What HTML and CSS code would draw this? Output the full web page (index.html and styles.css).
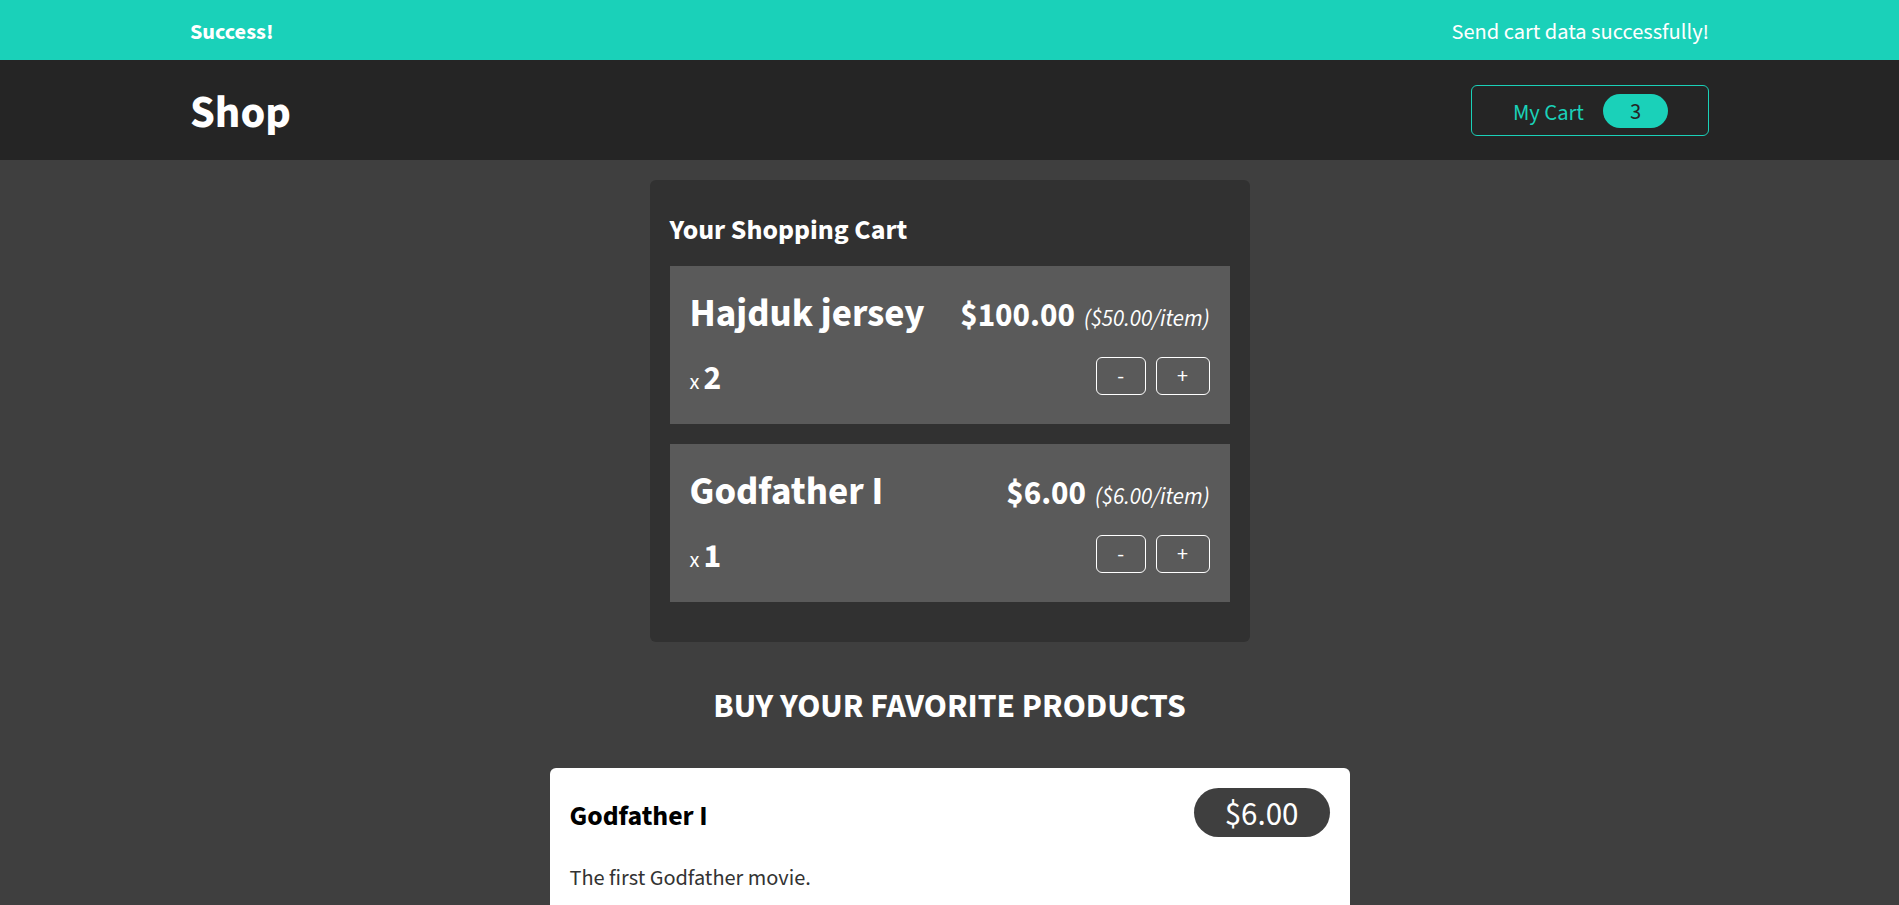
FILE: index.html
```html
<!DOCTYPE html>
<html lang="en">
<head>
<meta charset="utf-8">
<title>Shop</title>
<link rel="stylesheet" href="styles.css">
</head>
<body>
  <section class="notification">
    <div class="wrap notification-inner">
      <h2 class="notification-title">Success!</h2>
      <p class="notification-msg">Send cart data successfully!</p>
    </div>
  </section>

  <header class="main-header">
    <div class="wrap header-inner">
      <h1 class="logo">Shop</h1>
      <button class="cart-button">
        <span class="cart-label">My Cart</span>
        <span class="cart-badge">3</span>
      </button>
    </div>
  </header>

  <main class="main">
    <section class="cart">
      <h2 class="cart-title">Your Shopping Cart</h2>
      <ul class="cart-list">
        <li class="cart-item">
          <header class="item-head">
            <h3 class="item-title">Hajduk jersey</h3>
            <div class="item-price">$100.00<span class="item-unit">($50.00/item)</span></div>
          </header>
          <div class="item-foot">
            <div class="item-qty">x<span class="item-qty-num">2</span></div>
            <div class="item-actions">
              <button class="qty-btn">-</button>
              <button class="qty-btn">+</button>
            </div>
          </div>
        </li>
        <li class="cart-item">
          <header class="item-head">
            <h3 class="item-title">Godfather I</h3>
            <div class="item-price">$6.00<span class="item-unit">($6.00/item)</span></div>
          </header>
          <div class="item-foot">
            <div class="item-qty">x<span class="item-qty-num">1</span></div>
            <div class="item-actions">
              <button class="qty-btn">-</button>
              <button class="qty-btn">+</button>
            </div>
          </div>
        </li>
      </ul>
    </section>

    <section class="products">
      <h2 class="products-title">BUY YOUR FAVORITE PRODUCTS</h2>
      <ul class="product-list">
        <li class="product-card">
          <header class="product-head">
            <h3 class="product-name">Godfather I</h3>
            <div class="product-price">$6.00</div>
          </header>
          <p class="product-desc">The first Godfather movie.</p>
          <div class="product-actions">
            <button class="add-btn">Add to Cart</button>
          </div>
        </li>
        <li class="product-card">
          <header class="product-head">
            <h3 class="product-name">Hajduk jersey</h3>
            <div class="product-price">$50.00</div>
          </header>
          <p class="product-desc">The best football club jersey.</p>
          <div class="product-actions">
            <button class="add-btn">Add to Cart</button>
          </div>
        </li>
      </ul>
    </section>
  </main>
</body>
</html>
```

FILE: styles.css
```css
* { box-sizing: border-box; }

html, body {
  margin: 0;
  padding: 0;
}

body {
  background: #3f3f3f;
  color: #ffffff;
  font-family: "Source Sans 3", "Source Sans Pro", Lato, sans-serif;
  font-size: 22.3px;
}

.wrap {
  width: 80%;
  margin: 0 auto;
}

/* notification */
.notification {
  background: #1ad1b9;
  height: 60px;
  padding-top: 4px;
  display: flex;
  align-items: center;
}
.notification-inner {
  display: flex;
  justify-content: space-between;
  align-items: center;
}
.notification-title {
  margin: 0;
  font-size: 22.3px;
  font-weight: 700;
}
.notification-msg {
  margin: 0;
  font-size: 22.4px;
  font-weight: 400;
}

/* header */
.main-header {
  background: #252525;
  height: 100px;
  display: flex;
  align-items: center;
}
.header-inner {
  display: flex;
  justify-content: space-between;
  align-items: center;
}
.logo {
  margin: 6px 0 0;
  font-size: 44.8px;
  font-weight: 700;
  color: #ffffff;
}
.cart-button {
  display: flex;
  align-items: center;
  height: 51px;
  padding: 0 40px 0 41px;
  background: transparent;
  border: 1px solid #1ad1b9;
  border-radius: 6px;
  font-family: inherit;
  font-size: 22.5px;
  color: #1ad1b9;
}
.cart-label {
  padding-top: 6px;
  line-height: 31px;
}
.cart-badge {
  margin-left: 19px;
  height: 34px;
  padding: 2px 27px 0;
  line-height: 32px;
  border-radius: 20px;
  background: #1ad1b9;
  color: #252525;
  margin-top: 2px;
}

/* cart */
.main {
  padding: 20px 0 40px;
}
.cart {
  width: 600px;
  margin: 0 auto;
  padding: 20px;
  background: #313131;
  border-radius: 6px;
}
.cart-title {
  margin: 13px 0 18px;
  font-size: 28px;
  line-height: 35px;
  font-weight: 700;
}
.cart-list {
  list-style: none;
  margin: 0;
  padding: 0;
}
.cart-item {
  background: #5a5a5a;
  padding: 20px 20px 24px;
  margin-bottom: 20px;
}
.item-head {
  display: flex;
  justify-content: space-between;
  align-items: baseline;
  height: 56px;
}
.item-title {
  margin: 0;
  font-size: 39px;
  line-height: 56px;
  font-weight: 700;
}
.item-price {
  font-size: 33.1px;
  font-weight: 700;
}
.item-unit {
  margin-left: 9px;
  font-size: 23.3px;
  font-weight: 400;
  font-style: italic;
}
.item-foot {
  margin-top: 15px;
  display: flex;
  justify-content: space-between;
  align-items: flex-start;
}
.item-qty {
  height: 43px;
  padding-top: 5px;
  font-size: 22.3px;
  line-height: 33px;
}
.item-qty-num {
  margin-left: 4px;
  font-size: 33.5px;
  font-weight: 700;
}
.item-actions {
  display: flex;
  gap: 10px;
}
.qty-btn {
  height: 38px;
  padding: 0 20.5px;
  background: transparent;
  border: 1px solid #ffffff;
  border-radius: 6px;
  color: #ffffff;
  font-family: inherit;
  font-size: 22px;
  line-height: 1;
}

/* products */
.products {
  width: 800px;
  margin: 0 auto;
}
.products-title {
  margin: 44px 0 40px;
  text-align: center;
  font-size: 33.8px;
  line-height: 41.5px;
  font-weight: 700;
  text-transform: uppercase;
}
.product-list {
  list-style: none;
  margin: 0;
  padding: 0;
}
.product-card {
  background: #ffffff;
  color: #000000;
  border-radius: 6px;
  padding: 20px;
  margin-bottom: 20px;
}
.product-head {
  display: flex;
  justify-content: space-between;
  align-items: baseline;
}
.product-name {
  margin: 0;
  font-size: 27.8px;
  font-weight: 700;
  color: #000000;
}
.product-price {
  padding: 4px 31px 0;
  line-height: 45px;
  border-radius: 25px;
  background: #3f3f3f;
  color: #ffffff;
  font-size: 33px;
}
.product-desc {
  margin: 28px 0 0;
  font-size: 22.3px;
  line-height: 27.6px;
  color: #333333;
}
.product-actions {
  display: flex;
  justify-content: flex-end;
  margin-top: 20px;
}
.add-btn {
  padding: 8px 24px;
  background: transparent;
  border: 1px solid #1ad1b9;
  border-radius: 6px;
  color: #1ad1b9;
  font-family: inherit;
  font-size: 20px;
}
```
